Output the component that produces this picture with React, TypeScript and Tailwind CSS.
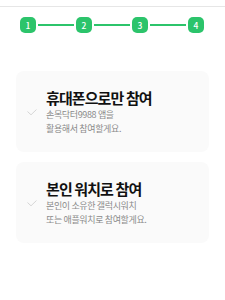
import React from "react";

const Check = () => (
  <svg width="10" height="7" viewBox="0 0 10 7" fill="none" className="shrink-0">
    <path d="M0.8 2.8 L4 5.8 L9.2 0.8" stroke="#d6d6d6" strokeWidth="1" strokeLinecap="round" strokeLinejoin="round" />
  </svg>
);

const Step = ({ n }: { n: number }) => (
  <div className="w-4 h-4 rounded-[5px] bg-[#2cc46b] flex items-center justify-center text-white text-[8.5px] font-medium leading-none">
    {n}
  </div>
);

const Line = () => <div className="w-9 h-[2px] bg-[#2cc46b] mx-[2px]" />;

const Card = ({ title, lines }: { title: string; lines: string[] }) => (
  <div className="mx-4 rounded-[8px] bg-[#fafafa] flex items-center pl-[11px] pt-[17px] pb-4">
    <Check />
    <div className="ml-[9px]">
      <div className="text-[15px] leading-[20px] font-bold text-[#111] tracking-[-0.06em]">{title}</div>
      {lines.map((l) => (
        <div key={l} className="text-[9px] leading-[14px] text-[#8a8a8a] tracking-[-0.04em]">
          {l}
        </div>
      ))}
    </div>
  </div>
);

export default function App() {
  return (
    <div
      className="w-[225px] h-[300px] bg-white overflow-hidden"
      style={{ fontFamily: '"Noto Sans CJK KR", "Noto Sans", sans-serif' }}
    >
      <div className="h-[7px] border-b border-[#e6e6e6]" />
      <div className="mt-[10px] flex items-center pl-5">
        <Step n={1} />
        <Line />
        <Step n={2} />
        <Line />
        <Step n={3} />
        <Line />
        <Step n={4} />
      </div>
      <div className="mt-[38px] flex flex-col gap-[10px]">
        <Card title="휴대폰으로만 참여" lines={["손목닥터9988 앱을", "활용해서 참여할게요."]} />
        <Card title="본인 워치로 참여" lines={["본인이 소유한 갤럭시워치", "또는 애플워치로 참여할게요."]} />
      </div>
    </div>
  );
}
